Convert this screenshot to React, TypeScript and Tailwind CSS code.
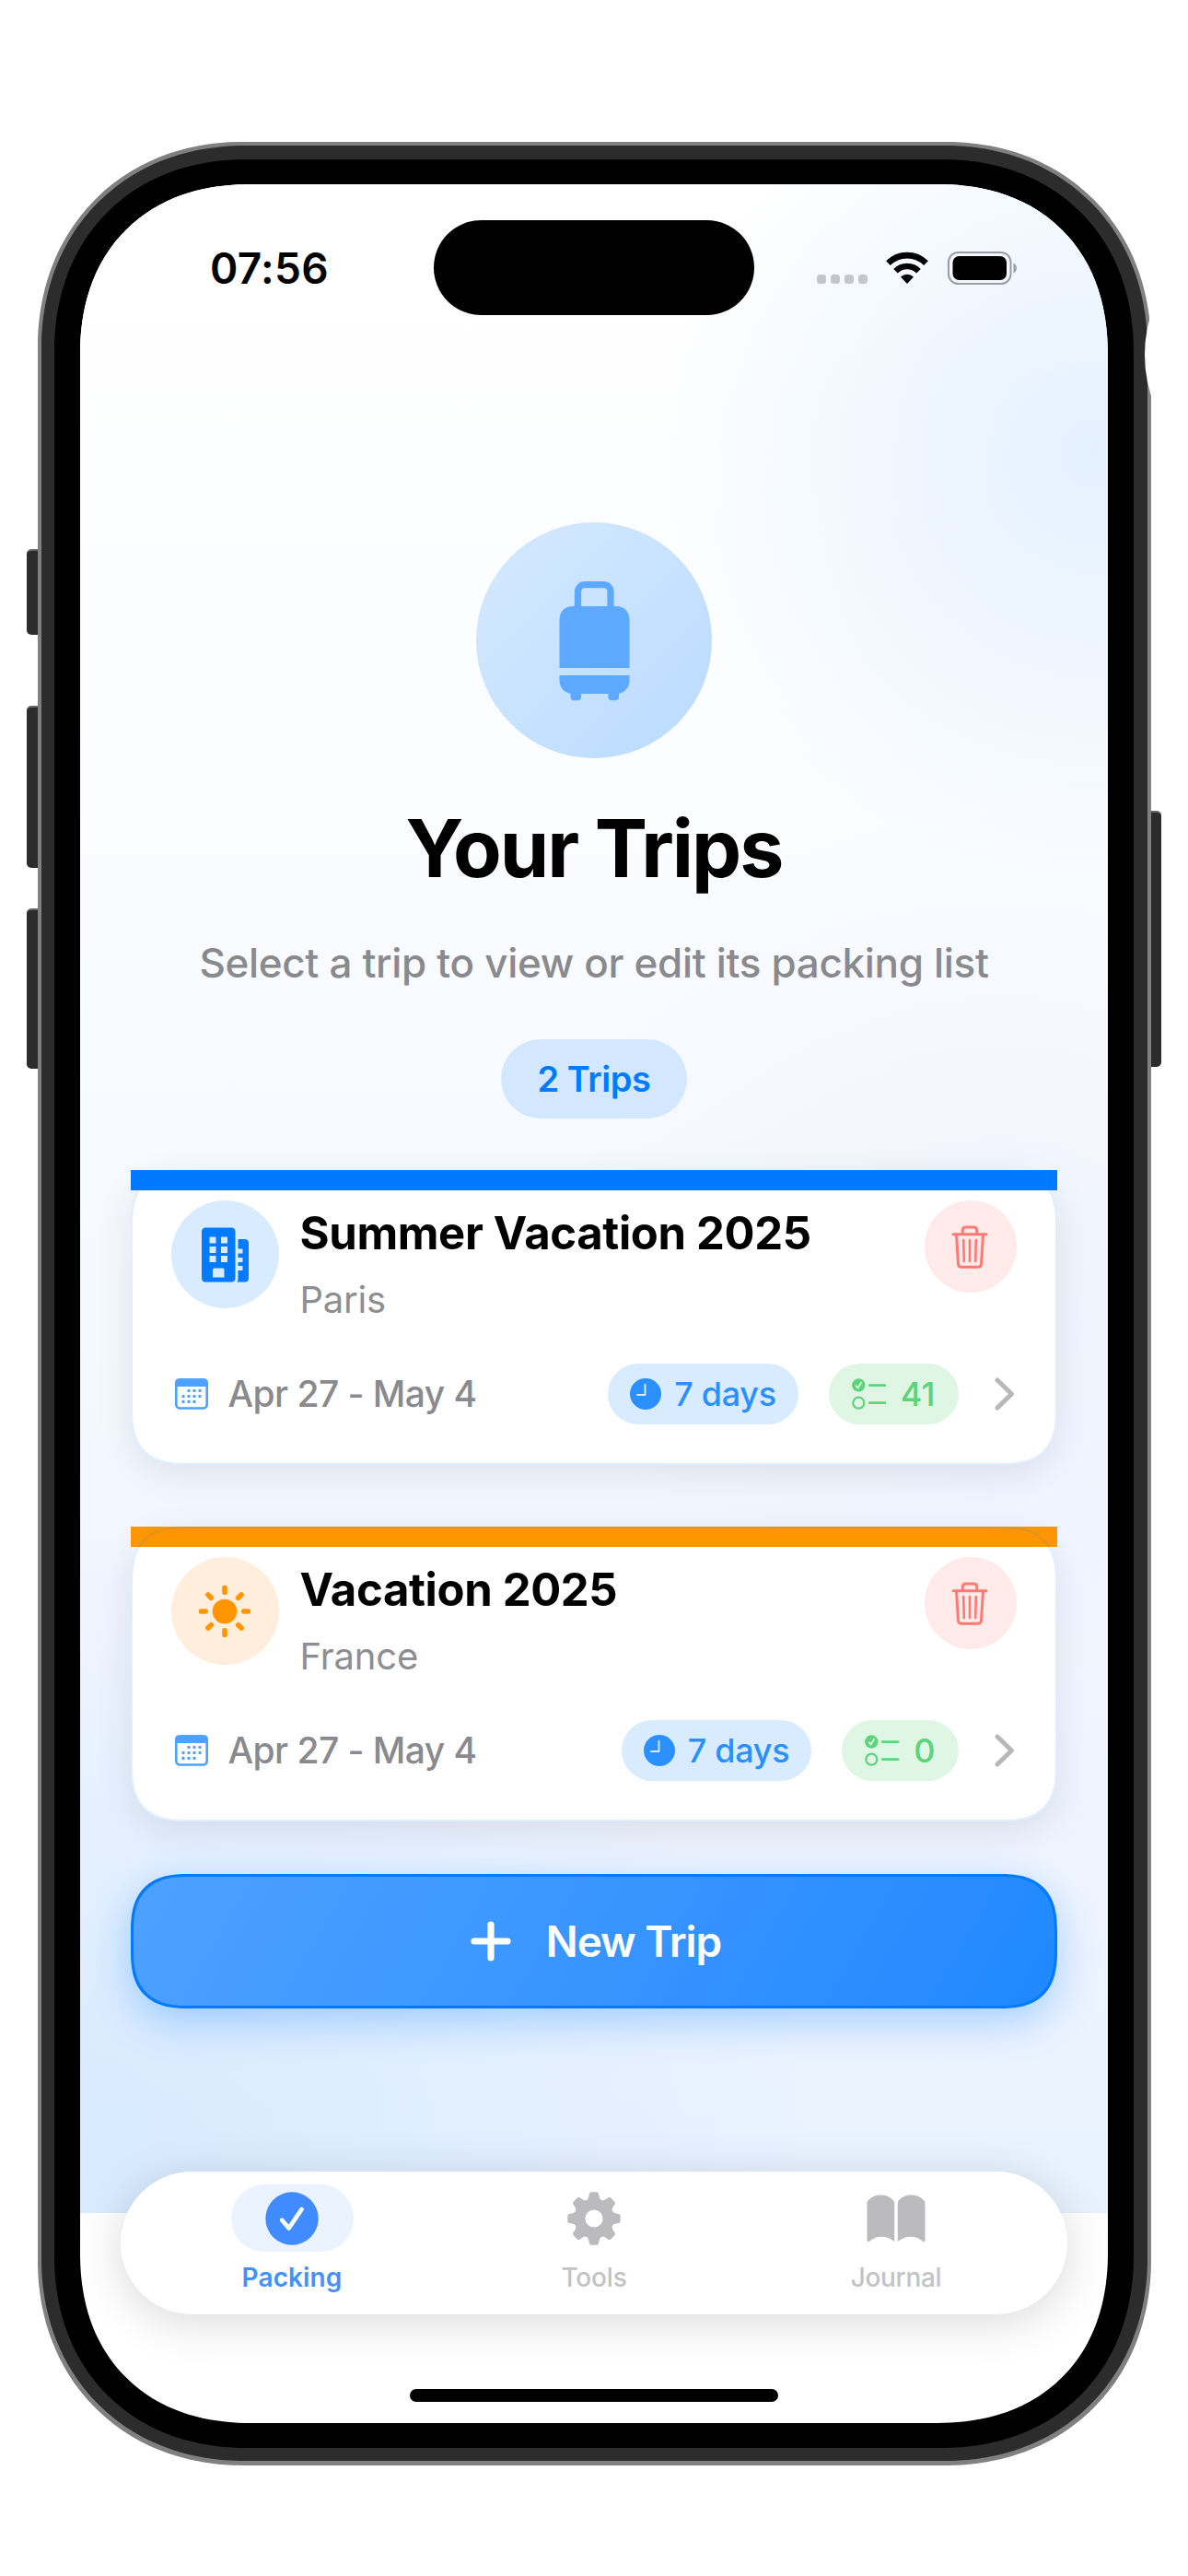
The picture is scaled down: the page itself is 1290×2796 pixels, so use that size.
import React from "react";

const EIGHTHS = [0, 45, 90, 135, 180, 225, 270, 315];

function WifiIcon() {
  return (
    <svg width="48" height="36" viewBox="0 0 48 36" fill="none">
      <path d="M3.5 12.6 A29 29 0 0 1 44.5 12.6" stroke="#000" strokeWidth="6.6" />
      <path d="M11.5 21.2 A17.6 17.6 0 0 1 36.5 21.2" stroke="#000" strokeWidth="6.4" />
      <path d="M24 35 L17 27.6 A10 10 0 0 1 31 27.6 Z" fill="#000" />
    </svg>
  );
}

function BatteryIcon() {
  return (
    <svg width="76" height="36" viewBox="0 0 76 36" fill="none">
      <rect x="1" y="1" width="67.5" height="34" rx="10.5" stroke="#9b9da3" strokeWidth="2" />
      <rect x="5.5" y="5" width="58.5" height="26" rx="7" fill="#000" />
      <path d="M71.5 12.5 C76 14.5 76 21.5 71.5 23.5 Z" fill="#9b9da3" />
    </svg>
  );
}

function SuitcaseIcon() {
  return (
    <svg width="77" height="130" viewBox="0 0 77 130" fill="#5ca9ff">
      <path
        d="M20.5 29 V11 A7.5 7.5 0 0 1 28 3.7 H48.5 A7.5 7.5 0 0 1 56 11 V29"
        fill="none"
        stroke="#5ca9ff"
        strokeWidth="7.2"
      />
      <path d="M0.5 94 V42 C0.5 32 7 27 15 27 H62 C70 27 76.5 32 76.5 42 V94 Z" />
      <path d="M0.5 102 H76.5 V107 C76.5 115 72 120 65 122 V125.5 C65 128 63.5 129.3 61.5 129.3 H57 C55 129.3 53.5 128 53.5 125.5 V122 H24 V125.5 C24 128 22.5 129.3 20.5 129.3 H16 C14 129.3 12.5 128 12.5 125.5 V122 C5 120 0.5 115 0.5 107 Z" />
    </svg>
  );
}

function BuildingIcon() {
  return (
    <svg width="51" height="60" viewBox="0 0 51 60">
      <path
        fill="#007aff"
        fillRule="evenodd"
        d="M4.5 0.5 H32 Q36.5 0.5 36.5 5 V55 Q36.5 59.5 32 59.5 H4.5 Q0 59.5 0 55 V5 Q0 0.5 4.5 0.5 Z M8.5 10.5 V17.5 H15.5 V10.5 Z M21 10.5 V17.5 H28 V10.5 Z M8.5 21 V28 H15.5 V21 Z M21 21 V28 H28 V21 Z M8.5 31 V38 H15.5 V31 Z M21 31 V38 H28 V31 Z M13.5 44.5 Q12 44.5 12 46 V54.5 H24.5 V46 Q24.5 44.5 23 44.5 Z"
      />
      <path
        fill="#007aff"
        d="M39.5 13 H46.5 Q51 13 51 17.5 V55 Q51 59.5 46.5 59.5 H38.5 L39.5 57 V47 H44.5 V42 H39.5 V38 H44.5 V33 H39.5 V28.5 H44.5 V23.5 H39.5 Z"
      />
    </svg>
  );
}

function SunIcon() {
  return (
    <svg width="56" height="58" viewBox="-28 -29 56 58">
      <circle r="13.3" fill="#ff9500" />
      {EIGHTHS.map((a) => (
        <line
          key={a}
          y1="-20.8"
          y2="-25.5"
          stroke="#ff9500"
          strokeWidth="5.6"
          strokeLinecap="round"
          transform={`rotate(${a})`}
        />
      ))}
    </svg>
  );
}

function TrashIcon() {
  return (
    <svg
      width="40"
      height="47"
      viewBox="0 0 40 47"
      fill="none"
      stroke="#ff7a74"
      strokeWidth="3"
      strokeLinecap="round"
      strokeLinejoin="round"
    >
      <path d="M2 9.8 H38" />
      <path d="M12.3 9.5 V5.5 Q12.3 2 15.8 2 H24.2 Q27.7 2 27.7 5.5 V9.5" />
      <path d="M5.5 10 L7.5 42 Q7.7 45.3 11 45.3 H29 Q32.3 45.3 32.5 42 L34.5 10" />
      <path d="M13.2 16 L13.8 39 M20 16 V39 M26.8 16 L26.2 39" strokeWidth="2.6" />
    </svg>
  );
}

const CALENDAR_DOTS = [
  [15, 13.5], [21, 13.5], [27, 13.5],
  [9, 19.5], [15, 19.5], [21, 19.5], [27, 19.5],
  [9, 25.3], [15, 25.3], [21, 25.3],
];

function CalendarIcon() {
  return (
    <svg width="36" height="34" viewBox="0 0 36 34">
      <rect x="1.3" y="1.5" width="33.4" height="31" rx="4" fill="#fff" stroke="#4da1ff" strokeWidth="2.6" />
      <path d="M0 9 V5 Q0 0.3 5 0.3 H31 Q36 0.3 36 5 V9 Z" fill="#4da1ff" />
      {CALENDAR_DOTS.map(([x, y]) => (
        <rect key={`${x}-${y}`} x={x - 1.6} y={y - 1.6} width="3.2" height="3.2" rx="1" fill="#4da1ff" />
      ))}
    </svg>
  );
}

function ClockIcon() {
  return (
    <svg width="34" height="34" viewBox="0 0 34 34">
      <circle cx="17" cy="17" r="17" fill="#2a90ff" />
      <path
        d="M16.5 6.8 V18 H8"
        fill="none"
        stroke="#d9ebff"
        strokeWidth="1.9"
        strokeLinecap="round"
        strokeLinejoin="round"
      />
    </svg>
  );
}

function ChecklistIcon() {
  return (
    <svg width="38" height="34" viewBox="0 0 38 34" fill="none" strokeLinecap="round" strokeLinejoin="round">
      <circle cx="7.3" cy="7.5" r="7.2" fill="#5bd47b" />
      <path d="M4.6 8.2 L6.6 10.5 L10.2 4.6" stroke="#e0f6e5" strokeWidth="1.8" />
      <circle cx="7.3" cy="26.7" r="6" stroke="#5bd47b" strokeWidth="2.2" />
      <path d="M19.3 7.7 H36 M19.3 26.7 H36" stroke="#5bd47b" strokeWidth="2.8" />
    </svg>
  );
}

function ChevronIcon() {
  return (
    <svg width="22" height="36" viewBox="0 0 22 36" fill="none">
      <path
        d="M3 3 L18.5 18 L3 33"
        stroke="#b8b8ba"
        strokeWidth="5"
        strokeLinecap="round"
        strokeLinejoin="round"
      />
    </svg>
  );
}

function PlusIcon() {
  return (
    <svg width="44" height="44" viewBox="0 0 44 44" fill="none">
      <path d="M22 4 V40 M4 22 H40" stroke="#fff" strokeWidth="7.2" strokeLinecap="round" />
    </svg>
  );
}

function CheckCircleIcon() {
  return (
    <svg width="58" height="58" viewBox="0 0 58 58" fill="none">
      <circle cx="29" cy="29" r="28.7" fill="#408bff" />
      <path
        d="M18.2 30.8 L25.7 39.5 L39.5 19"
        stroke="#fff"
        strokeWidth="4.8"
        strokeLinecap="round"
        strokeLinejoin="round"
      />
    </svg>
  );
}

function GearIcon() {
  return (
    <svg width="58" height="58" viewBox="-29 -29 58 58">
      <circle r="15.6" fill="none" stroke="#bbbbbd" strokeWidth="12" />
      {EIGHTHS.map((a) => (
        <path
          key={a}
          d="M-8.5 -18.5 Q-6.3 -21 -5.6 -24 L-5 -27 Q-4.6 -28.7 -3 -28.7 H3 Q4.6 -28.7 5 -27 L5.6 -24 Q6.3 -21 8.5 -18.5 Z"
          fill="#bbbbbd"
          transform={`rotate(${a})`}
        />
      ))}
    </svg>
  );
}

function BookIcon() {
  return (
    <svg width="64" height="52" viewBox="0 0 64 52" fill="#bbbbbd">
      <path d="M0.5 8 C4 3 9 0.5 15.5 0.5 C22 0.5 27 3 30.2 8 V51 C26 47.5 21 45.8 16 45.8 C11 45.8 7 47.2 3 50.7 Q0.5 52 0.5 49.5 Z" />
      <path d="M63.5 8 C60 3 55 0.5 48.5 0.5 C42 0.5 37 3 33.8 8 V51 C38 47.5 43 45.8 48 45.8 C53 45.8 57 47.2 61 50.7 Q63.5 52 63.5 49.5 Z" />
    </svg>
  );
}

function StatusBar() {
  return (
    <div className="mt-[39px] grid h-[103px] grid-cols-[384px_348px_384px] items-center">
      <span className="pl-[141px] text-[46px] leading-[60px] font-semibold tracking-[0.3px] whitespace-nowrap">
        07:56
      </span>
      <div className="h-[103px] rounded-[52px] bg-black" />
      <div className="flex items-center pl-[68px]">
        <div className="mt-[25px] flex gap-[5px]">
          {[0, 1, 2, 3].map((i) => (
            <div key={i} className="h-[10px] w-[10px] rounded-[3.5px] bg-[#c5c6c9]" />
          ))}
        </div>
        <div className="ml-[19px] flex items-center gap-[20px]">
          <WifiIcon />
          <BatteryIcon />
        </div>
      </div>
    </div>
  );
}

type Trip = {
  title: string;
  place: string;
  barClass: string;
  circleClass: string;
  icon: React.ReactNode;
  items: number;
};

const trips: Trip[] = [
  {
    title: "Summer Vacation 2025",
    place: "Paris",
    barClass: "bg-[#007aff]",
    circleClass: "bg-[#d9ebff]",
    icon: <BuildingIcon />,
    items: 41,
  },
  {
    title: "Vacation 2025",
    place: "France",
    barClass: "bg-[#ff9500]",
    circleClass: "bg-[#ffeedb]",
    icon: <SunIcon />,
    items: 0,
  },
];

function TripCard({ trip }: { trip: Trip }) {
  return (
    <article className="relative h-[320px] w-[1006px] rounded-[60px] bg-white shadow-[0_10px_40px_rgba(0,0,0,0.09)] [corner-shape:superellipse(1.4)]">
      <div className={`h-[22px] ${trip.barClass}`} />
      <div className="flex h-[128px] items-start px-[44px] pt-[11px]">
        <div className={`flex h-[117px] w-[117px] items-center justify-center rounded-full ${trip.circleClass}`}>
          {trip.icon}
        </div>
        <div className="ml-[23px] flex-1 pt-[6px]">
          <h2 className="text-[49px] leading-[60px] font-bold tracking-[-0.35px] whitespace-nowrap">{trip.title}</h2>
          <p className="mt-[17px] text-[40px] leading-[50px] tracking-[-0.2px] text-[#8e8e92]">{trip.place}</p>
        </div>
        <button className="flex h-[100px] w-[100px] items-center justify-center rounded-full bg-[#ffeaea] pr-[2px]">
          <TrashIcon />
        </button>
      </div>
      <div className="mt-[60px] flex h-[66px] items-center pr-[46px] pl-[48px]">
        <CalendarIcon />
        <span className="ml-[22px] flex-1 text-[39px] leading-[50px] font-medium tracking-[-0.57px] text-[#8a8a8e]">
          Apr 27 - May 4
        </span>
        <div className="flex h-[66px] items-center rounded-[33px] bg-[#d9ebff] px-[24px]">
          <ClockIcon />
          <span className="ml-[14px] text-[36px] leading-[50px] font-medium tracking-[-0.3px] text-[#2a90ff]">
            7 days
          </span>
        </div>
        <div className="ml-[33px] flex h-[66px] items-center rounded-[33px] bg-[#e0f6e5] px-[25px]">
          <ChecklistIcon />
          <span className="ml-[15px] text-[36px] leading-[50px] font-medium text-[#5bd47b]">{trip.items}</span>
        </div>
        <div className="ml-[39px]">
          <ChevronIcon />
        </div>
      </div>
      <div className="pointer-events-none absolute inset-0 rounded-[60px] border-2 border-[#007aff]/12 [corner-shape:superellipse(1.4)]" />
    </article>
  );
}

function TabBar() {
  return (
    <nav className="mt-[177px] grid h-[155px] w-[1028px] grid-cols-3 rounded-[78px] bg-white px-[22px] pt-[14px] shadow-[0_8px_50px_rgba(0,0,0,0.15)]">
      <div className="flex flex-col items-center">
        <div className="flex h-[73px] w-[133px] items-center justify-center rounded-[36px] bg-[#eaf3ff]">
          <CheckCircleIcon />
        </div>
        <span className="mt-[8px] text-[28px] leading-[40px] font-semibold tracking-[0.1px] text-[#4390ff]">
          Packing
        </span>
      </div>
      <div className="flex flex-col items-center">
        <div className="flex h-[73px] items-center">
          <GearIcon />
        </div>
        <span className="mt-[8px] text-[28px] leading-[40px] font-medium tracking-[-0.2px] text-[#c3c3c5]">Tools</span>
      </div>
      <div className="flex flex-col items-center">
        <div className="flex h-[73px] items-center">
          <BookIcon />
        </div>
        <span className="mt-[8px] text-[28px] leading-[40px] font-medium tracking-[-0.3px] text-[#c3c3c5]">
          Journal
        </span>
      </div>
    </nav>
  );
}

function SideButtons() {
  return (
    <>
      <div className="absolute top-[596px] left-[29px] h-[93px] w-[20px] rounded-[5px] border-t-2 border-[#666] bg-[#2c2c2c]" />
      <div className="absolute top-[766px] left-[29px] h-[176px] w-[20px] rounded-[5px] border-t-2 border-[#666] bg-[#2c2c2c]" />
      <div className="absolute top-[986px] left-[29px] h-[174px] w-[20px] rounded-[5px] border-t-2 border-[#666] bg-[#2c2c2c]" />
      <div className="absolute top-[880px] left-[1240px] h-[278px] w-[21px] rounded-[5px] border-t-2 border-[#666] bg-[#2c2c2c]" />
    </>
  );
}

export default function App() {
  return (
    <div className="relative h-[2796px] w-[1290px] overflow-hidden bg-white pt-[154px] pl-[41px] font-['Inter','Liberation_Sans',sans-serif] text-black">
      <SideButtons />

      <div className="relative h-[2522px] w-[1209px] rounded-[222px] bg-[#7f807f] p-[4px] pb-[5px] [corner-shape:superellipse(1.07)]">
        <div className="h-full w-full rounded-[219px] bg-[#2c2c2c] px-[14px] pt-[15px] pr-[15px] pb-[14px] [corner-shape:superellipse(1.07)]">
          <div className="h-full w-full rounded-[208px] bg-black px-[28px] py-[27px] [corner-shape:superellipse(1.1)]">
            <main className="relative flex h-[2430px] w-[1116px] flex-col items-center overflow-hidden rounded-[185px] bg-white [corner-shape:superellipse(1.15)]">
              <div className="absolute inset-x-0 top-0 h-[2202px] bg-[radial-gradient(circle_470px_at_1100px_290px,rgba(0,122,255,0.10),transparent),radial-gradient(circle_500px_at_1000px_1150px,rgba(88,86,214,0.03),transparent),radial-gradient(ellipse_800px_650px_at_0px_2100px,rgba(0,136,255,0.08),transparent),linear-gradient(180deg,#ffffff_0%,#fcfdff_25%,#f7faff_45%,#f0f5ff_75%,#e8f2ff_100%)]" />
              <div className="relative flex flex-col items-center">
                <StatusBar />
                <div className="mt-[225px] flex h-[256px] w-[256px] items-center justify-center rounded-full bg-linear-135 from-[#d6e9ff] to-[#b9dbff] pt-[2px]">
                  <SuitcaseIcon />
                </div>
                <h1 className="mt-[48px] text-[86px] leading-[100px] font-bold tracking-[-2px] whitespace-nowrap">
                  Your Trips
                </h1>
                <p className="mt-[44px] text-[44px] leading-[60px] font-medium tracking-[-0.33px] whitespace-nowrap text-[#8a8a8e]">
                  Select a trip to view or edit its packing list
                </p>
                <div className="mt-[53px] flex h-[86px] w-[202px] items-center justify-center rounded-[43px] bg-[#d3e8ff] text-[38px] font-semibold tracking-[-0.45px] text-[#007aff]">
                  2 Trips
                </div>
                <div className="mt-[56px] -ml-px flex flex-col gap-[67px]">
                  {trips.map((trip) => (
                    <TripCard key={trip.title} trip={trip} />
                  ))}
                </div>
                <button className="mt-[57px] flex h-[146px] w-[1006px] items-center justify-center rounded-[62px] border-[3px] border-[#007aff] bg-linear-120 from-[#4da1ff] to-[#1f88ff] pl-[4px] text-white shadow-[0_14px_45px_rgba(0,122,255,0.3)] [corner-shape:superellipse(1.35)]">
                  <PlusIcon />
                  <span className="ml-[38px] text-[46px] leading-[60px] font-semibold tracking-[-1.05px]">New Trip</span>
                </button>
                <TabBar />
                <div className="mt-[81px] h-[14px] w-[400px] rounded-full bg-black" />
              </div>
            </main>
          </div>
        </div>
      </div>

      {/* Shallow notch in the metal rim below the upper right corner */}
      <div className="absolute top-[237px] left-[1243px] h-[296px] w-[296px] rounded-full bg-white" />
    </div>
  );
}
